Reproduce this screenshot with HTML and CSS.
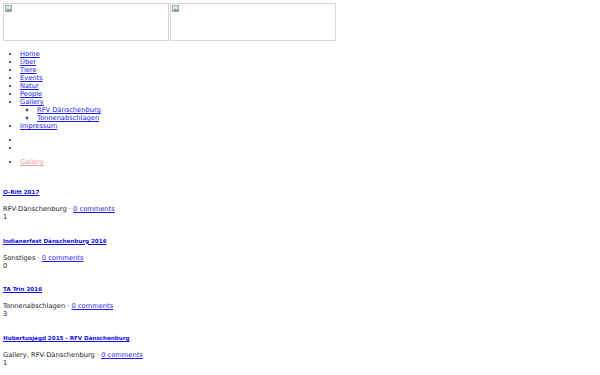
FILE: index.html
```html
<!DOCTYPE html>
<html>

<head>
    <title>RFV Dänschenburg</title>
    <link rel="stylesheet" href="styles.css">
</head>

<body>

    <div id="header">
        <span class="brokenimg"><svg width="7" height="7" viewBox="0 0 7 7"><rect x="0.5" y="0.5" width="6" height="6" fill="#dde6f0" stroke="#9aa8b8"/><path d="M1 6 L3 3.5 L4.5 5 L6 3.5 L6 6 Z" fill="#5fae4a"/></svg></span><span class="brokenimg"><svg width="7" height="7" viewBox="0 0 7 7"><rect x="0.5" y="0.5" width="6" height="6" fill="#dde6f0" stroke="#9aa8b8"/><path d="M1 6 L3 3.5 L4.5 5 L6 3.5 L6 6 Z" fill="#5fae4a"/></svg></span>
    </div>

    <ul id="menu">
        <li><a href="#">Home</a></li>
        <li><a href="#">Über</a></li>
        <li><a href="#">Tiere</a></li>
        <li><a href="#">Events</a></li>
        <li><a href="#">Natur</a></li>
        <li><a href="#">People</a></li>
        <li><a href="#">Gallery</a>
            <ul>
                <li><a href="#">RFV Dänschenburg</a></li>
                <li><a href="#">Tonnenabschlagen</a></li>
            </ul>
        </li>
        <li><a href="#">Impressum</a></li>
    </ul>

    <ul class="social">
        <li></li>
        <li></li>
    </ul>

    <ul class="crumbs">
        <li><a href="#">Gallery</a></li>
    </ul>

    <div class="post first">
        <h5><a href="#">O-Ritt 2017</a></h5>
        <div class="meta">RFV-Dänschenburg · <a href="#">0 comments</a></div>
        <div class="count">1</div>
    </div>

    <div class="post">
        <h5><a href="#">Indianerfest Dänschenburg 2016</a></h5>
        <div class="meta">Sonstiges · <a href="#">0 comments</a></div>
        <div class="count">0</div>
    </div>

    <div class="post">
        <h5><a href="#">TA Trin 2016</a></h5>
        <div class="meta">Tonnenabschlagen · <a href="#">0 comments</a></div>
        <div class="count">3</div>
    </div>

    <div class="post">
        <h5><a href="#">Hubertusjagd 2015 - RFV Dänschenburg</a></h5>
        <div class="meta">Gallery, RFV-Dänschenburg · <a href="#">0 comments</a></div>
        <div class="count">1</div>
    </div>

</body>

</html>
```

FILE: styles.css
```css
body {
    margin: 3px;
    font-family: "DejaVu Sans", sans-serif;
    font-size: 6.7px;
    line-height: 8px;
    color: #222;
    background: #fff;
}

a {
    color: #1a1aee;
}

#header {
    display: flex;
    height: 38px;
}

.brokenimg {
    display: block;
    width: 162px;
    height: 34px;
    border: 1px solid #d8d8d8;
    padding: 1px;
    margin-right: 1px;
}

.brokenimg svg {
    display: block;
}

ul {
    margin: 0;
    padding-left: 17px;
}

ul ul {
    padding-left: 17px;
    list-style-type: circle;
}

#menu {
    margin-top: 9px;
}

.social {
    margin-top: 6px;
}

.crumbs {
    margin-top: 6px;
}

.crumbs a {
    color: #f09a9a;
}

.post h5 {
    font-size: 5.6px;
    font-weight: bold;
    margin: 0;
    margin-top: 15.7px;
    line-height: 8px;
}

.post.first h5 {
    margin-top: 22px;
}

.post h5 a {
    color: #1010dd;
}

.meta {
    margin-top: 9px;
}
```
